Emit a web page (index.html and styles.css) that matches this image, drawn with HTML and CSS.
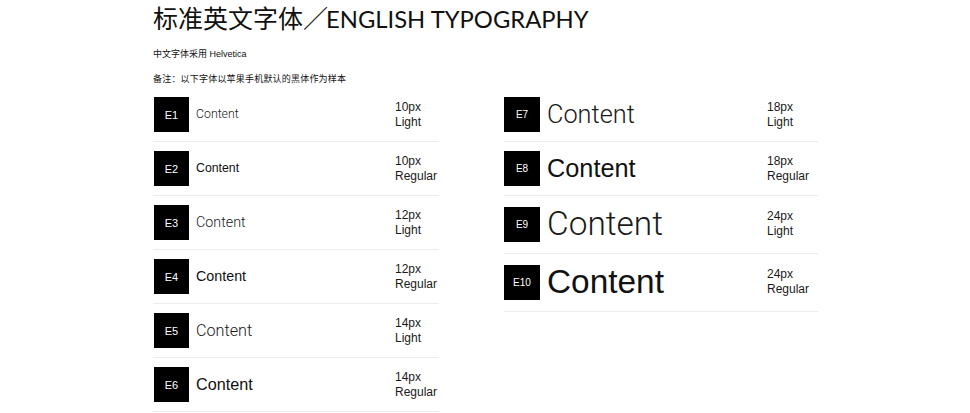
FILE: index.html
```html
<!DOCTYPE html>
<html lang="zh-CN">
<head>
<meta charset="utf-8">
<title>标准英文字体</title>
<link rel="stylesheet" href="styles.css">
</head>
<body>
<div class="page">
  <h1 class="title"><span class="title-cn">标准英文字体／</span><span class="title-en">ENGLISH TYPOGRAPHY</span></h1>
  <p class="note note-1">中文字体采用 Helvetica</p>
  <p class="note note-2">备注：以下字体以苹果手机默认的黑体作为样本</p>
  <div class="columns">
    <div class="col col-left">
      <div class="row"><div class="tag">E1</div><div class="sample light s10">Content</div><div class="spec">10px<br>Light</div></div>
      <div class="row"><div class="tag">E2</div><div class="sample regular s10">Content</div><div class="spec">10px<br>Regular</div></div>
      <div class="row"><div class="tag">E3</div><div class="sample light s12">Content</div><div class="spec">12px<br>Light</div></div>
      <div class="row"><div class="tag">E4</div><div class="sample regular s12">Content</div><div class="spec">12px<br>Regular</div></div>
      <div class="row"><div class="tag">E5</div><div class="sample light s14">Content</div><div class="spec">14px<br>Light</div></div>
      <div class="row"><div class="tag">E6</div><div class="sample regular s14">Content</div><div class="spec">14px<br>Regular</div></div>
    </div>
    <div class="col col-right">
      <div class="row"><div class="tag">E7</div><div class="sample light s18">Content</div><div class="spec">18px<br>Light</div></div>
      <div class="row"><div class="tag">E8</div><div class="sample regular s18">Content</div><div class="spec">18px<br>Regular</div></div>
      <div class="row"><div class="tag">E9</div><div class="sample light s24">Content</div><div class="spec">24px<br>Light</div></div>
      <div class="row"><div class="tag">E10</div><div class="sample regular s24">Content</div><div class="spec">24px<br>Regular</div></div>
    </div>
  </div>
</div>
</body>
</html>
```
FILE: styles.css
```css
* { box-sizing: border-box; }
html, body { margin: 0; padding: 0; background: #fff; }
body {
  font-family: "Liberation Sans", "Noto Sans CJK SC", sans-serif;
  color: #111;
  width: 970px;
  height: 413px;
  overflow: hidden;
}
.page {
  padding: 2px 0 0 153px;
}
.title {
  margin: 0;
  font-weight: 400;
  font-size: 25px;
  line-height: 30px;
  color: #111;
  white-space: nowrap;
}
.title-cn {
  font-family: "Noto Sans CJK SC", sans-serif;
  font-weight: 400;
}
.title-en {
  font-family: "Lato", "Liberation Sans", sans-serif;
  font-weight: 400;
  font-size: 23.8px;
  margin-left: -2px;
}
.note {
  margin: 0;
  font-family: "Liberation Sans", "Noto Sans CJK SC", sans-serif;
  font-size: 9px;
  line-height: 12px;
  color: #111;
}
.note-1 { margin-top: 14px; }
.note-2 { margin-top: 13px; letter-spacing: 0.2px; }
.columns {
  display: flex;
  margin-top: 3px;
}
.col-left { width: 286px; }
.col-right { width: 314px; margin-left: 65px; }
.row {
  display: grid;
  align-items: center;
  padding: 9px 0;
  border-bottom: 1px solid #ececec;
}
.col-left .row { grid-template-columns: 35px 1fr 44px; column-gap: 7px; padding-left: 1px; }
.col-right .row { grid-template-columns: 36px 1fr 51px; column-gap: 7px; }
.tag {
  height: 35px;
  background: #000;
  color: #fff;
  font-size: 11px;
  display: flex;
  align-items: center;
  justify-content: center;
}
.col-right .tag { font-size: 10px; }
.sample {
  line-height: 1.1;
  white-space: nowrap;
}
.sample.light {
  font-family: "Roboto", "Liberation Sans", sans-serif;
  font-weight: 300;
  color: #1a1a1a;
}
.sample.regular {
  font-family: "Liberation Sans", sans-serif;
  font-weight: 400;
  color: #111;
}
.s10 { font-size: 12.3px; }
.s12 { font-size: 14.3px; }
.s14 { font-size: 16.2px; }
.s18 { font-size: 25.3px; }
.s24 { font-size: 33.4px; line-height: 1.16; }
.spec {
  font-size: 12px;
  line-height: 15px;
  color: #1a1a1a;
  white-space: nowrap;
}
```
